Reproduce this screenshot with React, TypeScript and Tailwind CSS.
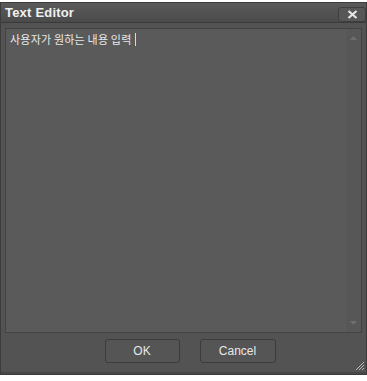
import { useState } from 'react';

export default function App() {
  const [text, setText] = useState('사용자가 원하는 내용 입력');

  return (
    <div
      className="w-[367px] h-[381px] overflow-hidden bg-white pt-[2px] pb-[6px]"
      style={{ fontFamily: '"Liberation Sans", "Noto Sans CJK KR", sans-serif' }}
    >
      {/* Dialog window */}
      <div className="relative flex h-full flex-col border border-[#3c3c3c] bg-[#535353]">
        {/* Title bar */}
        <header className="flex h-[20px] items-center justify-between border-b border-[#3a3a3a] bg-gradient-to-b from-[#5a5a5a] to-[#4b4b4b] pl-[4px] pr-0">
          <span className="text-[13px] font-bold leading-none tracking-[0.2px] text-[#f0f0f0]">Text Editor</span>
          <button className="mt-[4px] flex h-[15px] w-[28px] items-center justify-center rounded-[3px] border border-[#3e3e3e] bg-[#575757]">
            <svg width="11" height="9" viewBox="0 0 11 9">
              <path d="M1.5 1 L9.5 8 M9.5 1 L1.5 8" stroke="#e6e6e6" strokeWidth="2.2" />
            </svg>
          </button>
        </header>

        {/* Editor body */}
        <main className="flex flex-1 flex-col px-[4px] pt-[5px]">
          <div className="flex h-[305px] border border-[#434343] bg-[#5a5a5a]">
            <div className="flex-1 px-[4px] pt-[3px]">
              <div className="flex items-center text-[11px] leading-[14px] tracking-[0.2px] text-[#e8e8e8]" style={{ fontFamily: '"Noto Sans CJK KR", sans-serif' }}>
                <span>{text}</span>
                <span className="ml-[3px] h-[13px] w-px bg-[#d8d8d8]" />
              </div>
              <input className="hidden" value={text} onChange={(e) => setText(e.target.value)} />
            </div>
            {/* Scrollbar */}
            <div className="flex w-[15px] flex-col items-center justify-between bg-[#575757] py-[7px]">
              <svg width="7" height="4" viewBox="0 0 7 4">
                <path d="M0 4 L3.5 0 L7 4 Z" fill="#6e6e6e" />
              </svg>
              <svg width="7" height="4" viewBox="0 0 7 4">
                <path d="M0 0 L3.5 4 L7 0 Z" fill="#6e6e6e" />
              </svg>
            </div>
          </div>

          {/* Buttons */}
          <div className="flex justify-center gap-[20px] pt-[6px] pl-[13px]">
            <button className="h-[24px] w-[75px] rounded-[3px] border border-[#3c3c3c] bg-[#555555] text-[12px] text-[#e8e8e8]">
              OK
            </button>
            <button className="h-[24px] w-[76px] rounded-[3px] border border-[#3c3c3c] bg-[#555555] text-[12px] text-[#e8e8e8]">
              Cancel
            </button>
          </div>
        </main>

        {/* Bottom rim */}
        <div className="h-[2px] bg-[#474747]" />

        {/* Resize grip */}
        <svg className="absolute bottom-[3px] right-[1px]" width="11" height="11" viewBox="0 0 11 11">
          <path d="M10 2 L2 10 M10 5 L5 10 M10 8 L8 10" stroke="#bdbdbd" strokeWidth="1" />
        </svg>
      </div>
    </div>
  );
}
